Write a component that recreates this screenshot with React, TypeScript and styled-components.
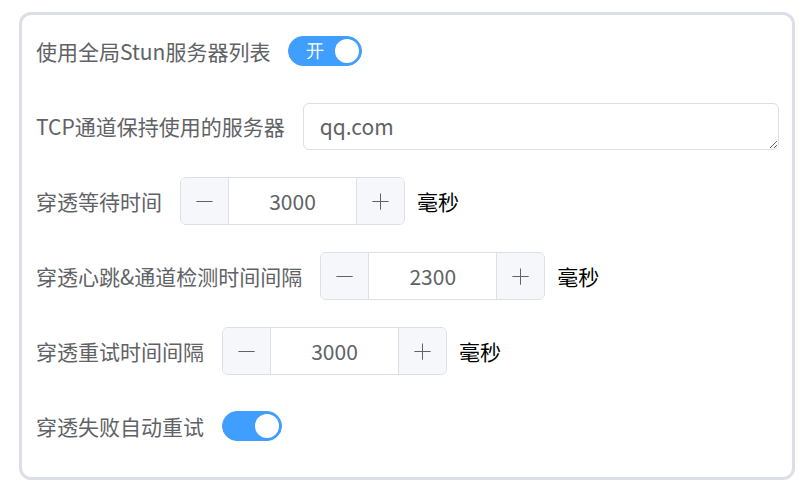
import React, { useState } from "react";
import styled, { createGlobalStyle } from "styled-components";

const GlobalStyle = createGlobalStyle`
  body {
    margin: 0;
    background: #ffffff;
    font-family: "Noto Sans CJK SC", "Noto Sans", sans-serif;
  }
`;

const Page = styled.div`
  padding: 12px 15px 9px 19px;
`;

const Card = styled.div`
  border: 3px solid #dcdfe6;
  border-radius: 12px;
  padding: 12px 13px 0 14px;
`;

const FormItem = styled.div`
  display: flex;
  align-items: center;
  height: 48px;
  margin-bottom: 27px;
`;

const Label = styled.label`
  font-size: 21px;
  line-height: 48px;
  color: #606266;
  padding-right: 18px;
  white-space: nowrap;
`;

const Track = styled.button<{ $on: boolean; $width: number }>`
  position: relative;
  display: flex;
  align-items: center;
  box-sizing: border-box;
  width: ${(p) => p.$width}px;
  height: 30px;
  padding: 0;
  border: 1px solid ${(p) => (p.$on ? "#409eff" : "#dcdfe6")};
  border-radius: 15px;
  background: ${(p) => (p.$on ? "#409eff" : "#dcdfe6")};
  cursor: pointer;
  outline: none;
`;

const Knob = styled.span<{ $on: boolean }>`
  position: absolute;
  top: 2px;
  ${(p) => (p.$on ? "right: 2px;" : "left: 2px;")}
  width: 24px;
  height: 24px;
  border-radius: 50%;
  background: #ffffff;
`;

const InnerText = styled.span`
  padding-left: 17px;
  font-size: 18px;
  line-height: 28px;
  color: #ffffff;
`;

const Switch = ({ on, text }: { on: boolean; text?: string }) => {
  const [value, setValue] = useState(on);
  return (
    <Track $on={value} $width={text ? 74 : 60} onClick={() => setValue(!value)}>
      {text && <InnerText>{text}</InnerText>}
      <Knob $on={value} />
    </Track>
  );
};

const TextArea = styled.textarea`
  flex: 1;
  box-sizing: border-box;
  height: 47px;
  margin-top: 1px;
  padding: 7px 16px;
  border: 1px solid #dcdfe6;
  border-radius: 6px;
  font-family: inherit;
  font-size: 21px;
  line-height: 31px;
  color: #606266;
  resize: vertical;
  outline: none;
`;

const NumberBox = styled.div`
  display: flex;
  box-sizing: border-box;
  width: 225px;
  height: 48px;
  border: 1px solid #dcdfe6;
  border-radius: 6px;
  overflow: hidden;
`;

const StepButton = styled.button<{ $side: "left" | "right" }>`
  display: flex;
  align-items: center;
  justify-content: center;
  width: 48px;
  padding: 0;
  border: none;
  ${(p) => (p.$side === "left" ? "border-right" : "border-left")}: 1px solid #dcdfe6;
  background: #f5f7fa;
  color: #606266;
  cursor: pointer;
`;

const NumberInput = styled.input`
  flex: 1;
  min-width: 0;
  border: none;
  padding: 0;
  text-align: center;
  font-family: inherit;
  font-size: 21px;
  color: #606266;
  outline: none;
`;

const Unit = styled.span`
  margin-left: 12px;
  font-size: 21px;
  color: #000000;
`;

const MinusIcon = () => (
  <svg width="21" height="21" viewBox="0 0 1024 1024" fill="currentColor">
    <path d="M128 536h768a24 24 0 1 0 0-48H128a24 24 0 0 0 0 48z" />
  </svg>
);

const PlusIcon = () => (
  <svg width="21" height="21" viewBox="0 0 1024 1024" fill="currentColor">
    <path d="M488 488V128a24 24 0 0 1 48 0v360h360a24 24 0 1 1 0 48H536v360a24 24 0 1 1-48 0V536H128a24 24 0 0 1 0-48h360z" />
  </svg>
);

const InputNumber = ({ initial }: { initial: number }) => {
  const [value, setValue] = useState(initial);
  return (
    <NumberBox>
      <StepButton $side="left" onClick={() => setValue(value - 1)}>
        <MinusIcon />
      </StepButton>
      <NumberInput value={value} onChange={(e) => setValue(Number(e.target.value) || 0)} />
      <StepButton $side="right" onClick={() => setValue(value + 1)}>
        <PlusIcon />
      </StepButton>
    </NumberBox>
  );
};

const numberRows = [
  { label: "穿透等待时间", value: 3000 },
  { label: "穿透心跳&通道检测时间间隔", value: 2300 },
  { label: "穿透重试时间间隔", value: 3000 },
];

export default function App() {
  return (
    <Page>
      <GlobalStyle />
      <Card>
        <FormItem>
          <Label>使用全局Stun服务器列表</Label>
          <Switch on text="开" />
        </FormItem>
        <FormItem>
          <Label>TCP通道保持使用的服务器</Label>
          <TextArea rows={1} defaultValue="qq.com" />
        </FormItem>
        {numberRows.map((row) => (
          <FormItem key={row.label}>
            <Label>{row.label}</Label>
            <InputNumber initial={row.value} />
            <Unit>毫秒</Unit>
          </FormItem>
        ))}
        <FormItem>
          <Label>穿透失败自动重试</Label>
          <Switch on />
        </FormItem>
      </Card>
    </Page>
  );
}
